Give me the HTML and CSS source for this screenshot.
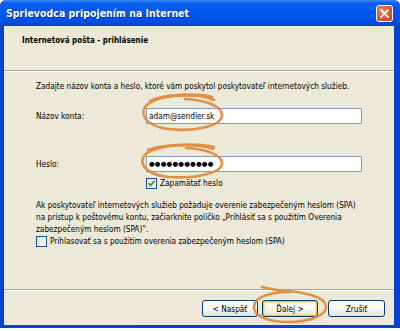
FILE: index.html
```html
<!DOCTYPE html>
<html>
<head>
<meta charset="utf-8">
<link rel="stylesheet" href="styles.css">
</head>
<body>
<div class="window">
  <div class="titlebar">
    <span class="title">Sprievodca pripojením na Internet</span>
    <span class="close"><svg width="9" height="9" viewBox="0 0 9 9"><path d="M1 1L8 8M8 1L1 8" stroke="#fff" stroke-width="1.8" stroke-linecap="square"/></svg></span>
  </div>
  <div class="client">
    <div class="header">Internetová pošta - prihlásenie</div>
    <div class="sep"></div>
    <div class="content">
      <p class="intro">Zadajte názov konta a heslo, ktoré vám poskytol poskytovateľ internetových služieb.</p>
      <div class="row row-name">
        <span class="label">Názov konta:</span>
        <span class="input">adam@sendler.sk</span>
      </div>
      <div class="row row-pass">
        <span class="label">Heslo:</span>
        <span class="input pass">●●●●●●●●●●●</span>
      </div>
      <div class="check check-remember">
        <span class="cb"><svg width="9" height="9" viewBox="0 0 9 9"><path d="M1.5 4.2L3.6 6.5L7.6 1.8" fill="none" stroke="#21a121" stroke-width="1.7"/></svg></span>
        <span>Zapamätať heslo</span>
      </div>
      <p class="note">Ak poskytovateľ internetových služieb požaduje overenie zabezpečeným heslom (SPA)<br>na prístup k poštovému kontu, začiarknite políčko „Prihlásiť sa s použitím Overenia<br>zabezpečeným heslom (SPA)“.</p>
      <div class="check">
        <span class="cb"></span>
        <span>Prihlasovať sa s použitím overenia zabezpečeným heslom (SPA)</span>
      </div>
    </div>
    <div class="footer">
      <div class="buttons">
        <span class="btn">&lt; Naspäť</span>
        <span class="btn btn-default">Ďalej &gt;</span>
        <span class="btn btn-cancel">Zrušiť</span>
      </div>
    </div>
  </div>
  <svg class="marks" width="400" height="331" viewBox="0 0 400 331">
    <g fill="none" stroke="#e0883a" stroke-width="2.6" stroke-linecap="round" opacity="0.92">
      <path d="M214 100 C200 93 160 94 148 104 C138 112 144 126 168 129 C195 132 222 126 222 115 C222 106 205 100 185 99"/>
      <path d="M150 101 C165 94 195 93 212 97"/>
      <path d="M213 149 C198 143 160 144 147 153 C137 161 143 174 168 177 C196 179 222 173 222 163 C222 155 206 149 186 148"/>
      <path d="M148 150 C164 144 196 143 214 147"/>
      <path d="M262 287 C270 289 276 290 285 291 C305 292 325 297 326 306 C327 316 308 322 288 322 C266 322 253 315 254 306 C255 297 270 292 290 292"/>
    </g>
  </svg>
</div>
</body>
</html>
```

FILE: styles.css
```css
* { box-sizing: border-box; }
html, body { margin: 0; padding: 0; background: #fff; }
body {
  font-family: "DejaVu Sans Condensed", "DejaVu Sans", sans-serif;
  font-size: 8.2px;
  color: #000;
}
.window {
  position: relative;
  width: 400px;
  height: 328px;
  background: #0842d4;
  display: flex;
  flex-direction: column;
  border-radius: 6px 6px 0 0;
  overflow: hidden;
}
.titlebar {
  height: 26px;
  flex: none;
  display: flex;
  align-items: center;
  justify-content: space-between;
  padding: 0 7px 0 6px;
  background: linear-gradient(#3d8cf6 0, #0b5fec 3px, #0057ee 45%, #0050e6 80%, #0043d0 100%);
}
.title {
  color: #fff;
  font-weight: bold;
  font-size: 10.5px;
  text-shadow: 1px 1px 0 #0a2f8c;
}
.close {
  width: 17px;
  height: 17px;
  border: 1px solid #fff;
  border-radius: 3px;
  background: radial-gradient(circle at 35% 30%, #ef8a6a 0, #e05a38 45%, #c8401f 100%);
  display: flex;
  align-items: center;
  justify-content: center;
}
.close svg { display: block; }
.client {
  flex: 1;
  margin: 0 6px 3px 4px;
  background: #ece9d8;
  display: flex;
  flex-direction: column;
}
.header {
  height: 44px;
  padding: 9px 0 0 18px;
  font-weight: bold;
  line-height: 11px;
  font-size: 8px;
}
.sep {
  border-top: 1px solid #aca899;
  border-bottom: 1px solid #fff;
}
.content {
  flex: 1;
  padding-left: 32px;
}
p { margin: 0; }
.intro {
  margin-top: 8px;
  line-height: 12px;
}
.row {
  display: flex;
  align-items: center;
  height: 16px;
}
.row-name { margin-top: 16px; }
.row-pass { margin-top: 32px; }
.label { width: 110px; }
.input {
  width: 216px;
  height: 16px;
  border: 1px solid #7f9db9;
  background: #fff;
  padding-left: 2px;
  line-height: 14px;
}
.pass {
  font-family: "DejaVu Sans", sans-serif;
  font-size: 6.5px;
  letter-spacing: 0.2px;
}
.check {
  display: flex;
  align-items: center;
  gap: 3px;
  height: 12px;
}
.check-remember {
  margin-top: 5px;
  margin-left: 110px;
}
.cb {
  width: 11px;
  height: 11px;
  border: 1px solid #1c5180;
  background: linear-gradient(135deg, #dcdcd7 0, #fff 90%);
  display: flex;
  align-items: center;
  justify-content: center;
}
.cb svg { display: block; }
.note {
  margin-top: 10px;
  line-height: 12px;
}
.footer {
  border-top: 1px solid #aca899;
  box-shadow: inset 0 1px 0 #fff;
  padding: 10px 9px 8px 0;
}
.buttons {
  display: flex;
  justify-content: flex-end;
}
.btn {
  width: 56px;
  height: 17px;
  border: 1px solid #003c74;
  border-radius: 3px;
  background: linear-gradient(#fff 0, #f5f4ef 60%, #e3e1d6 100%);
  display: flex;
  align-items: center;
  justify-content: center;
}
.btn-default {
  margin-left: 4px;
  box-shadow: inset 0 0 0 1px #f5c449, inset 0 0 0 2px #fbe29a;
}
.btn-cancel {
  margin-left: 10px;
  width: 57px;
}
.marks {
  position: absolute;
  top: 0;
  left: 0;
  pointer-events: none;
}
```
